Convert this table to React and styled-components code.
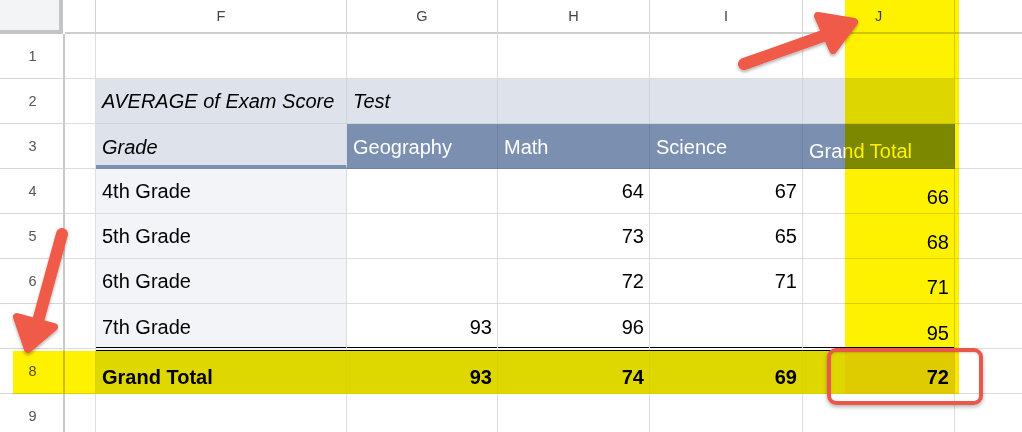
import React from "react";
import styled, { createGlobalStyle, css } from "styled-components";

const Global = createGlobalStyle`
  html, body { margin: 0; padding: 0; background: #fff; overflow: hidden; }
  body { font-family: "Liberation Sans", Arial, sans-serif; }
`;

const Stage = styled.div`
  position: relative;
  width: 1022px;
  height: 432px;
  overflow: hidden;
`;

const Sheet = styled.div`
  display: grid;
  grid-template-columns: 65px 31px 251px 151px 152px 153px 152px 1fr;
  grid-template-rows: 34px repeat(9, 45px);
  width: 1100px;
`;

const Corner = styled.div`
  box-sizing: border-box;
  background: #f3f4f5;
  border-right: 4px solid #c4c4c4;
  border-bottom: 4px solid #c4c4c4;
  margin-right: 2px;
`;

const ColHeader = styled.div`
  box-sizing: border-box;
  display: flex;
  align-items: center;
  justify-content: center;
  border-right: 1px solid #d4d4d4;
  border-bottom: 2px solid #cfcfcf;
  font-size: 14.5px;
  color: #444;
`;

const RowHeader = styled.div`
  box-sizing: border-box;
  display: flex;
  align-items: center;
  justify-content: center;
  border-right: 2px solid #c9c9c9;
  border-bottom: 1px solid #d6d6d6;
  font-size: 14.5px;
  color: #555;
  padding-left: 2px;
`;

const Cell = styled.div`
  box-sizing: border-box;
  display: flex;
  align-items: center;
  justify-content: ${(p) => (p.$num ? "flex-end" : "flex-start")};
  padding: ${(p) => (p.$drop ? `${p.$drop}px` : "0")} ${(p) => (p.$num ? "5px" : "0")} 0
    ${(p) => (p.$num ? "0" : "6px")};
  background: ${(p) => p.$bg || "#fff"};
  color: ${(p) => p.$color || "#000"};
  border-right: 1px solid ${(p) => p.$line || "#dcdcdc"};
  border-bottom: 1px solid ${(p) => p.$line || "#dcdcdc"};
  font-size: 20px;
  font-style: ${(p) => (p.$italic ? "italic" : "normal")};
  font-weight: ${(p) => (p.$bold ? 700 : 400)};
  white-space: nowrap;
  overflow: visible;
  ${(p) =>
    p.$underline &&
    css`
      border-bottom: 4px solid #7b8fb1;
    `}
  ${(p) =>
    p.$double &&
    css`
      border-bottom: 4px double #000;
      margin-bottom: -2px;
      position: relative;
      z-index: 1;
    `}
`;

const Highlight = styled.div`
  position: absolute;
  background: #fff200;
  mix-blend-mode: multiply;
  pointer-events: none;
  z-index: 2;
`;

const Callout = styled.div`
  position: absolute;
  left: 827px;
  top: 348px;
  width: 156px;
  height: 57px;
  box-sizing: border-box;
  border: 4px solid #e9584b;
  border-radius: 9px;
  box-shadow: 0 2px 4px rgba(0, 0, 0, 0.3), inset 0 1px 2px rgba(0, 0, 0, 0.15);
  pointer-events: none;
  z-index: 3;
`;

const Arrows = styled.svg`
  position: absolute;
  left: 0;
  top: 0;
  pointer-events: none;
  z-index: 3;
`;

const COLS = ["", "", "F", "G", "H", "I", "J", ""];
const HEAD_BG = "#dee2ea";
const LEFT_BG = "#f3f4f7";
const SLATE = "#7b8fb1";
const TOTAL_BG = "#dfe3eb";

const rows = [
  { n: 1, cells: [] },
  {
    n: 2,
    cells: [
      { t: "AVERAGE of Exam Score", italic: true, bg: HEAD_BG, line: "#cfd3da" },
      { t: "Test", italic: true, bg: HEAD_BG, line: "#cfd3da" },
      { bg: HEAD_BG, line: "#cfd3da" },
      { bg: HEAD_BG, line: "#cfd3da" },
      { bg: HEAD_BG, line: "#cfd3da" },
    ],
  },
  {
    n: 3,
    cells: [
      { t: "Grade", italic: true, bg: HEAD_BG, underline: true, drop: 5 },
      { t: "Geography", bg: SLATE, color: "#fff", line: "#6f83a5", drop: 3 },
      { t: "Math", bg: SLATE, color: "#fff", line: "#6f83a5", drop: 3 },
      { t: "Science", bg: SLATE, color: "#fff", line: "#6f83a5", drop: 3 },
      { t: "Grand Total", bg: SLATE, color: "#fff", line: "#6f83a5", drop: 10 },
    ],
  },
  { n: 4, g: "4th Grade", v: ["", "64", "67", "66"] },
  { n: 5, g: "5th Grade", v: ["", "73", "65", "68"] },
  { n: 6, g: "6th Grade", v: ["", "72", "71", "71"] },
  { n: 7, g: "7th Grade", v: ["93", "96", "", "95"], double: true },
  {
    n: 8,
    cells: [
      { t: "Grand Total", bold: true, bg: TOTAL_BG, drop: 12 },
      { t: "93", bold: true, bg: TOTAL_BG, num: true, drop: 12 },
      { t: "74", bold: true, bg: TOTAL_BG, num: true, drop: 12 },
      { t: "69", bold: true, bg: TOTAL_BG, num: true, drop: 12 },
      { t: "72", bold: true, bg: TOTAL_BG, num: true, drop: 12 },
    ],
  },
  { n: 9, cells: [] },
];

function buildCells(r) {
  if (r.cells) return r.cells;
  const base = r.double ? 4 : 0;
  return [
    { t: r.g, bg: LEFT_BG, double: r.double, drop: base },
    ...r.v.map((t, i) => ({
      t,
      num: true,
      double: r.double,
      drop: i === 3 ? 12 + base : base,
    })),
  ];
}

export default function App() {
  return (
    <>
      <Global />
      <Stage>
        <Sheet>
          <Corner />
          {COLS.slice(1).map((c, i) => (
            <ColHeader key={i}>{c}</ColHeader>
          ))}
          {rows.map((r) => {
            const cells = buildCells(r);
            const five = [0, 1, 2, 3, 4].map((i) => cells[i] || {});
            return (
              <React.Fragment key={r.n}>
                <RowHeader>{r.n}</RowHeader>
                <Cell />
                {five.map((c, i) => (
                  <Cell
                    key={i}
                    $bg={c.bg}
                    $color={c.color}
                    $line={c.line}
                    $italic={c.italic}
                    $bold={c.bold}
                    $num={c.num}
                    $drop={c.drop}
                    $underline={c.underline}
                    $double={c.double}
                  >
                    {c.t}
                  </Cell>
                ))}
                <Cell />
              </React.Fragment>
            );
          })}
        </Sheet>

        <Highlight style={{ left: 845, top: 0, width: 114, height: 394 }} />
        <Highlight style={{ left: 13, top: 351, width: 946, height: 43 }} />

        <Callout />

        <Arrows width="1022" height="432" viewBox="0 0 1022 432">
          <defs>
            <filter id="sh" x="-20%" y="-20%" width="140%" height="140%">
              <feDropShadow dx="0" dy="2" stdDeviation="1.5" floodColor="#000" floodOpacity="0.3" />
            </filter>
          </defs>
          <g filter="url(#sh)" fill="#f05a4a" stroke="#f05a4a" strokeLinejoin="round" strokeLinecap="round">
            <line x1="744" y1="64" x2="840" y2="30" strokeWidth="12" />
            <polygon points="854,22 818,16 833,50" strokeWidth="8" />
            <line x1="62" y1="234" x2="37" y2="325" strokeWidth="12" />
            <polygon points="28,349 17,317 54,327" strokeWidth="8" />
          </g>
        </Arrows>
      </Stage>
    </>
  );
}
